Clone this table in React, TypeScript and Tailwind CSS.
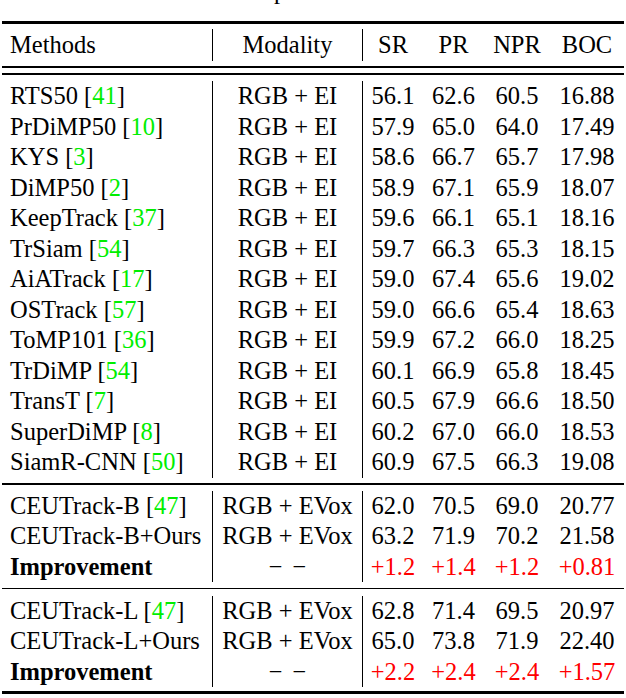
import React from "react";

type Row = {
  method: string;
  cite?: string;
  modality: string;
  vals: string[];
  bold?: boolean;
};

const baseline: Row[] = [
  { method: "RTS50", cite: "41", modality: "RGB + EI", vals: ["56.1", "62.6", "60.5", "16.88"] },
  { method: "PrDiMP50", cite: "10", modality: "RGB + EI", vals: ["57.9", "65.0", "64.0", "17.49"] },
  { method: "KYS", cite: "3", modality: "RGB + EI", vals: ["58.6", "66.7", "65.7", "17.98"] },
  { method: "DiMP50", cite: "2", modality: "RGB + EI", vals: ["58.9", "67.1", "65.9", "18.07"] },
  { method: "KeepTrack", cite: "37", modality: "RGB + EI", vals: ["59.6", "66.1", "65.1", "18.16"] },
  { method: "TrSiam", cite: "54", modality: "RGB + EI", vals: ["59.7", "66.3", "65.3", "18.15"] },
  { method: "AiATrack", cite: "17", modality: "RGB + EI", vals: ["59.0", "67.4", "65.6", "19.02"] },
  { method: "OSTrack", cite: "57", modality: "RGB + EI", vals: ["59.0", "66.6", "65.4", "18.63"] },
  { method: "ToMP101", cite: "36", modality: "RGB + EI", vals: ["59.9", "67.2", "66.0", "18.25"] },
  { method: "TrDiMP", cite: "54", modality: "RGB + EI", vals: ["60.1", "66.9", "65.8", "18.45"] },
  { method: "TransT", cite: "7", modality: "RGB + EI", vals: ["60.5", "67.9", "66.6", "18.50"] },
  { method: "SuperDiMP", cite: "8", modality: "RGB + EI", vals: ["60.2", "67.0", "66.0", "18.53"] },
  { method: "SiamR-CNN", cite: "50", modality: "RGB + EI", vals: ["60.9", "67.5", "66.3", "19.08"] },
];

const ceuB: Row[] = [
  { method: "CEUTrack-B", cite: "47", modality: "RGB + EVox", vals: ["62.0", "70.5", "69.0", "20.77"] },
  { method: "CEUTrack-B+Ours", modality: "RGB + EVox", vals: ["63.2", "71.9", "70.2", "21.58"] },
  { method: "Improvement", modality: "−−", vals: ["+1.2", "+1.4", "+1.2", "+0.81"], bold: true },
];

const ceuL: Row[] = [
  { method: "CEUTrack-L", cite: "47", modality: "RGB + EVox", vals: ["62.8", "71.4", "69.5", "20.97"] },
  { method: "CEUTrack-L+Ours", modality: "RGB + EVox", vals: ["65.0", "73.8", "71.9", "22.40"] },
  { method: "Improvement", modality: "−−", vals: ["+2.2", "+2.4", "+2.4", "+1.57"], bold: true },
];

const cols = "grid grid-cols-[210px_150px_61px_61px_66px_74px]";

function TableRow({ row }: { row: Row }) {
  return (
    <div className={`${cols} h-[30.5px] leading-[30.5px]`}>
      <div className={`pl-[8px] whitespace-nowrap ${row.bold ? "font-bold" : ""}`}>
        {row.method}
        {row.cite && (
          <>
            {" "}[<span className="text-[#00ee00]">{row.cite}</span>]
          </>
        )}
      </div>
      <div className="border-l border-black text-center whitespace-nowrap">
        {row.modality === "−−" ? (
          <span className="inline-flex gap-[10px]">
            <span>−</span>
            <span>−</span>
          </span>
        ) : (
          row.modality
        )}
      </div>
      {row.vals.map((v, i) => (
        <div
          key={i}
          className={`text-center ${i === 0 ? "border-l border-black" : ""} ${row.bold ? "text-[#ff0000]" : ""}`}
        >
          {v}
        </div>
      ))}
    </div>
  );
}

export default function App() {
  return (
    <div className="w-[626px] h-[698px] overflow-hidden bg-white text-black [font-family:'Liberation_Serif',serif] text-[24.5px]">
      {/* caption, cut off above */}
      <div className="h-[21px] overflow-hidden pl-[274px]">
        <div className="-mt-[24px] leading-[30px]">p</div>
      </div>

      <div className="ml-[2px] w-[622px]">
        <div className="h-[3px] bg-black" />

        {/* header */}
        <div className="pt-[5px] pb-[5px]">
          <div className={`${cols} h-[32px] leading-[32px]`}>
            <div className="pl-[8px]">Methods</div>
            <div className="border-l border-black text-center">Modality</div>
            <div className="border-l border-black text-center">SR</div>
            <div className="text-center">PR</div>
            <div className="text-center">NPR</div>
            <div className="text-center">BOC</div>
          </div>
        </div>

        <div className="h-[1.5px] bg-black" />
        <div className="h-[5.5px]" />
        <div className="h-[1.5px] bg-black" />

        <div className="pt-[6.5px] pb-[5.5px]">
          {baseline.map((r) => (
            <TableRow key={r.method} row={r} />
          ))}
        </div>

        <div className="h-[1.5px] bg-black" />

        <div className="pt-[6px] pb-[5.5px]">
          {ceuB.map((r, i) => (
            <TableRow key={i} row={r} />
          ))}
        </div>

        <div className="h-[1.5px] bg-black" />

        <div className="pt-[6.5px] pb-[3.5px]">
          {ceuL.map((r, i) => (
            <TableRow key={i} row={r} />
          ))}
        </div>

        <div className="h-[3px] bg-black" />
      </div>
    </div>
  );
}
